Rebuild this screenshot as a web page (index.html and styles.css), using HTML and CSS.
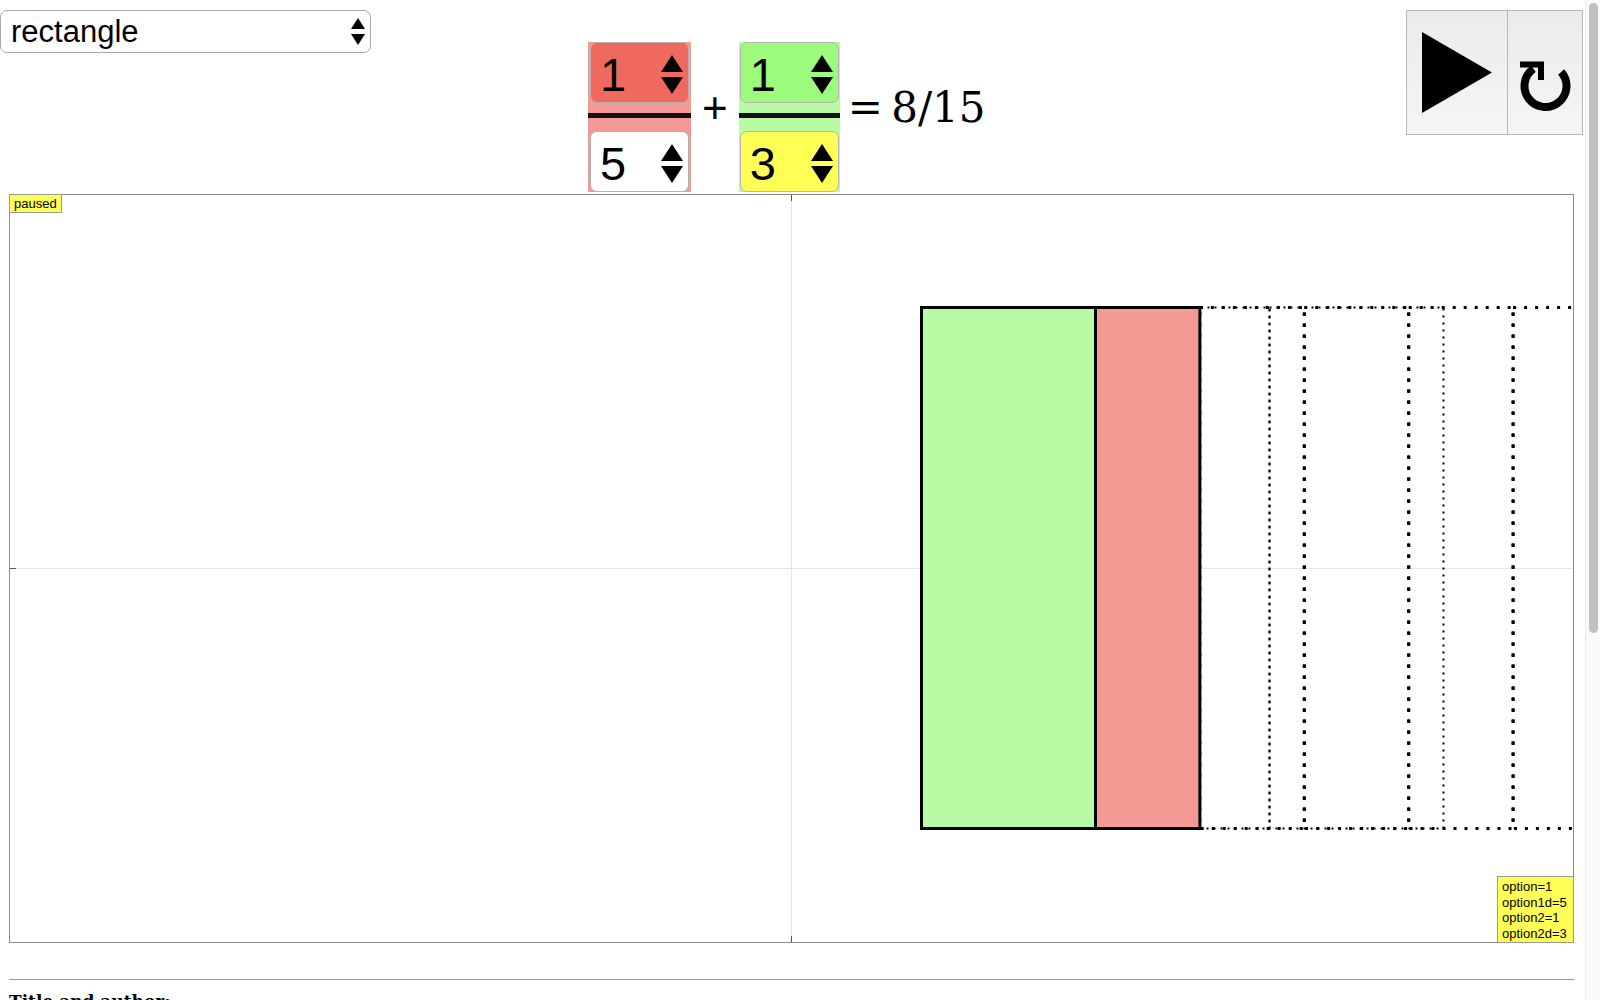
FILE: index.html
```html
<!DOCTYPE html>
<html lang="en">
<head>
  <meta charset="UTF-8" />
  <meta name="viewport" content="width=device-width, initial-scale=1.0" />
  <title>Adding fractions</title>
  <link rel="stylesheet" href="styles.css">
</head>
<body>
  <div class="top">
    <div class="shape-pick">
      <select class="shape-select">
        <option>rectangle</option>
        <option>circle</option>
        <option>number line</option>
      </select>
      <svg class="select-arrows" width="14" height="27" viewBox="0 0 14 27">
        <polygon points="7,0 14,11 0,11" />
        <polygon points="0,16 14,16 7,27" />
      </svg>
    </div>

    <div class="equation">
      <div class="frac frac-red">
        <div class="num-box box-red">
          <span>1</span>
          <svg class="spin" width="22" height="39" viewBox="0 0 22 39"><polygon points="11,0 22,17 0,17" /><polygon points="0,22 22,22 11,39" /></svg>
        </div>
        <div class="frac-bar"></div>
        <div class="num-box box-white">
          <span>5</span>
          <svg class="spin" width="22" height="39" viewBox="0 0 22 39"><polygon points="11,0 22,17 0,17" /><polygon points="0,22 22,22 11,39" /></svg>
        </div>
      </div>
      <span class="op op-plus">+</span>
      <div class="frac frac-green">
        <div class="num-box box-green">
          <span>1</span>
          <svg class="spin" width="22" height="39" viewBox="0 0 22 39"><polygon points="11,0 22,17 0,17" /><polygon points="0,22 22,22 11,39" /></svg>
        </div>
        <div class="frac-bar"></div>
        <div class="num-box box-yellow">
          <span>3</span>
          <svg class="spin" width="22" height="39" viewBox="0 0 22 39"><polygon points="11,0 22,17 0,17" /><polygon points="0,22 22,22 11,39" /></svg>
        </div>
      </div>
      <span class="op op-result">= 8/15</span>
    </div>

    <div class="controls">
      <button class="btn btn-play" title="play">
        <svg width="70" height="81" viewBox="0 0 70 81"><polygon points="0,0 70,40.5 0,81" /></svg>
      </button>
      <button class="btn btn-reset" title="reset">
        <svg width="60" height="60" viewBox="0 0 60 60">
          <path d="M46.1 16.95 A21 21 0 1 1 18.45 13.8" fill="none" stroke="#000" stroke-width="8" />
          <polyline points="5,9.5 26,9.5 26,25" fill="none" stroke="#000" stroke-width="6" />
        </svg>
      </button>
    </div>
  </div>

  <div class="stage">
    <svg class="stage-svg" width="1563" height="747" viewBox="0 0 1563 747">
      <!-- axes -->
      <line x1="781.5" y1="0" x2="781.5" y2="747" stroke="#e6e6e6" />
      <line x1="0" y1="373.5" x2="1563" y2="373.5" stroke="#e6e6e6" />
      <line x1="0" y1="373.5" x2="6" y2="373.5" stroke="#555" />
      <line x1="781.5" y1="0" x2="781.5" y2="6" stroke="#555" />
      <line x1="781.5" y1="741" x2="781.5" y2="747" stroke="#555" />

      <!-- ghost pieces that make up one whole -->
      <g fill="none" stroke="#000">
        <rect x="1085.5" y="112.5" width="174" height="521" stroke-width="2" stroke-dasharray="2 5" />
        <rect x="1259.5" y="112.5" width="174" height="521" stroke-width="2" stroke-dasharray="2 5" />
        <rect x="1189.9" y="112.5" width="104.4" height="521" stroke-width="3" stroke-dasharray="3 8" />
        <rect x="1294.3" y="112.5" width="104.4" height="521" stroke-width="3" stroke-dasharray="3 8" />
        <rect x="1398.7" y="112.5" width="104.4" height="521" stroke-width="3" stroke-dasharray="3 8" />
        <rect x="1503.1" y="112.5" width="104.4" height="521" stroke-width="3" stroke-dasharray="3 8" />
      </g>

      <!-- the two fractions -->
      <rect x="911.5" y="112.5" width="174" height="521" fill="#b9fba4" stroke="#000" stroke-width="3" />
      <rect x="1085.5" y="112.5" width="104.4" height="521" fill="#f49993" stroke="#000" stroke-width="3" />
    </svg>
    <div class="tag tag-paused">paused</div>
    <div class="tag tag-options">option=1<br>option1d=5<br>option2=1<br>option2d=3</div>
  </div>

  <hr>

  <div class="meta">
    <h3>Title and author:</h3>
    <p>Adding fractions with unlike denominators</p>
    <h3>Description:</h3>
    <p>Pick a numerator and a denominator for each fraction. Press play to slide the pieces together and see how many fifteenths they fill.</p>
    <h3>Options:</h3>
    <ul>
      <li>option &ndash; numerator of the first fraction</li>
      <li>option1d &ndash; denominator of the first fraction</li>
      <li>option2 &ndash; numerator of the second fraction</li>
      <li>option2d &ndash; denominator of the second fraction</li>
    </ul>
    <h3>Notes:</h3>
    <textarea class="notes" rows="8"></textarea>
  </div>

  <div class="page-scroll" aria-hidden="true"><div class="page-scroll-thumb"></div></div>
</body>
</html>
```

FILE: styles.css
```css
body {
  width: 1585px;
  margin: 0;
  font-family: 'Liberation Sans', Arial, sans-serif;
  background: #fff;
  color: #000;
}
.top {
  display: flex;
  align-items: flex-start;
  height: 194px;
}
.shape-pick {
  position: relative;
  margin-top: 10px;
}
.shape-select {
  appearance: none;
  -webkit-appearance: none;
  width: 371px;
  height: 43px;
  padding: 0 0 0 10px;
  font-family: 'Liberation Sans', Arial, sans-serif;
  font-size: 31px;
  color: #000;
  background: #fff;
  border: 1px solid #a9a9a9;
  border-radius: 7px;
}
.select-arrows {
  position: absolute;
  right: 6px;
  top: 8px;
  pointer-events: none;
}
.equation {
  display: flex;
  align-items: center;
  margin-top: 42px;
  margin-left: 217px;
}
.frac {
  width: 103px;
  box-sizing: border-box;
  padding: 0 2px;
  display: flex;
  flex-direction: column;
}
.frac-red {
  background-color: #f49993;
}
.frac-green {
  width: 101px;
  padding: 0 1px;
  background-color: #b9fba4;
}
.num-box {
  height: 61px;
  box-sizing: border-box;
  display: flex;
  align-items: center;
  justify-content: space-between;
  padding: 3px 5px 0 9px;
  font-size: 47px;
  border: 1px solid #b4b4b4;
  border-radius: 7px;
}
.box-red {
  background-color: #f0695e;
}
.box-white {
  background-color: #fff;
}
.box-green {
  background-color: #9cfa7c;
}
.box-yellow {
  background-color: #ffff55;
}
.frac-bar {
  height: 5px;
  margin: 10px -2px 13px;
  background-color: #111;
}
.frac-green .frac-bar {
  margin-left: -1px;
  margin-right: -1px;
}
.op {
  line-height: 1;
  padding-bottom: 18px;
}
.op-plus {
  font-size: 44px;
  margin: 0 11px 0 11px;
}
.op-result {
  font-family: 'DejaVu Serif', serif;
  font-size: 42px;
  word-spacing: -5px;
  margin-left: 8px;
}
.controls {
  display: flex;
  margin-left: auto;
  margin-top: 10px;
  margin-right: 2px;
}
.btn {
  height: 125px;
  padding: 0;
  display: flex;
  border: 1px solid #b8b8b8;
  background: linear-gradient(#ebebeb, #f5f5f5);
}
.btn-play {
  width: 102px;
  align-items: center;
  justify-content: center;
}
.btn-reset {
  width: 76px;
  margin-left: -1px;
  align-items: flex-start;
  padding: 44px 0 0 7px;
}
.btn svg {
  display: block;
}
.stage {
  position: relative;
  width: 1563px;
  height: 747px;
  margin-left: 9px;
  border: 1px solid #8c8c8c;
}
.stage-svg {
  display: block;
}
.tag {
  position: absolute;
  background-color: #ffff55;
  border: 1px solid #999;
  font-size: 13px;
  line-height: 15.5px;
}
.tag-paused {
  left: -1px;
  top: -1px;
  padding: 1px 4px 0 4px;
}
.tag-options {
  right: -1px;
  bottom: -1px;
  width: 67px;
  padding: 2px 4px 1px 4px;
}
hr {
  width: 1565px;
  height: 0;
  margin: 36px 0 0 9px;
  border: 0;
  border-top: 1px solid #999;
}
.meta {
  min-height: 580px;
  margin-left: 9px;
  font-family: 'DejaVu Serif', serif;
}
.meta h3 {
  font-size: 17px;
  margin: 11px 0 6px;
}
.meta p,
.meta li {
  font-size: 15px;
  line-height: 1.5;
}
.notes {
  width: 600px;
  font-size: 15px;
}
.page-scroll {
  position: fixed;
  top: 0;
  right: 0;
  width: 14px;
  height: 100vh;
  background-color: #fafafa;
  border-left: 1px solid #ebebeb;
}
.page-scroll-thumb {
  width: 9px;
  height: 630px;
  margin: 3px 0 0 3px;
  border-radius: 5px;
  background-color: #c2c2c2;
}
```
